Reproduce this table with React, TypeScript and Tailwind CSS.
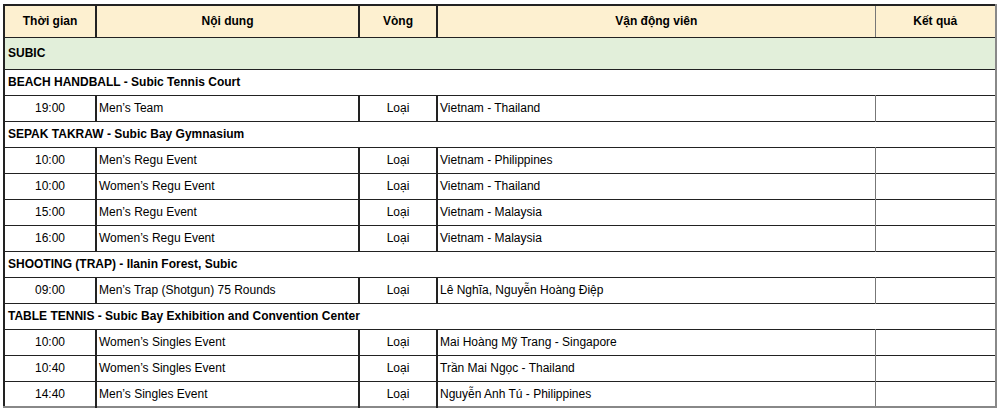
type Row =
  | { kind: "section"; label: string; green?: boolean }
  | { kind: "event"; time: string; event: string; round: string; athletes: string };

const rows: Row[] = [
  { kind: "section", label: "SUBIC", green: true },
  { kind: "section", label: "BEACH HANDBALL - Subic Tennis Court" },
  { kind: "event", time: "19:00", event: "Men’s Team", round: "Loại", athletes: "Vietnam - Thailand" },
  { kind: "section", label: "SEPAK TAKRAW - Subic Bay Gymnasium" },
  { kind: "event", time: "10:00", event: "Men’s Regu Event", round: "Loại", athletes: "Vietnam - Philippines" },
  { kind: "event", time: "10:00", event: "Women’s Regu Event", round: "Loại", athletes: "Vietnam - Thailand" },
  { kind: "event", time: "15:00", event: "Men’s Regu Event", round: "Loại", athletes: "Vietnam - Malaysia" },
  { kind: "event", time: "16:00", event: "Women’s Regu Event", round: "Loại", athletes: "Vietnam - Malaysia" },
  { kind: "section", label: "SHOOTING (TRAP) - Ilanin Forest, Subic" },
  { kind: "event", time: "09:00", event: "Men’s Trap (Shotgun) 75 Rounds", round: "Loại", athletes: "Lê Nghĩa, Nguyễn Hoàng Điệp" },
  { kind: "section", label: "TABLE TENNIS - Subic Bay Exhibition and Convention Center" },
  { kind: "event", time: "10:00", event: "Women’s Singles Event", round: "Loại", athletes: "Mai Hoàng Mỹ Trang - Singapore" },
  { kind: "event", time: "10:40", event: "Women’s Singles Event", round: "Loại", athletes: "Trần Mai Ngọc - Thailand" },
  { kind: "event", time: "14:40", event: "Men’s Singles Event", round: "Loại", athletes: "Nguyễn Anh Tú - Philippines" },
];

const App = () => {
  return (
    <div className="w-[1000px] h-[414px] bg-white pt-[4px] pl-[3px] font-['Liberation_Sans',Arial,sans-serif] text-[12px] text-black">
      <table className="w-[992px] border-collapse table-fixed border-l-2 border-t-2 border-r-2 border-b-2 border-l-[#222] border-t-[#222] border-r-[#888] border-b-[#888]">
        <colgroup>
          <col className="w-[92px]" />
          <col className="w-[263px]" />
          <col className="w-[78px]" />
          <col className="w-[438px]" />
          <col className="w-[121px]" />
        </colgroup>
        <thead>
          <tr className="h-[32px] bg-[#fdf0d0] font-bold">
            <th className="border-r-2 border-r-[#222] border-b border-b-[#222] text-center font-bold">Thời gian</th>
            <th className="border-r-2 border-r-[#222] border-b border-b-[#222] text-center font-bold">Nội dung</th>
            <th className="border-r-2 border-r-[#222] border-b border-b-[#222] text-center font-bold">Vòng</th>
            <th className="border-r border-r-[#777] border-b border-b-[#222] text-center font-bold">Vận động viên</th>
            <th className="border-b border-b-[#222] text-center font-bold">Kết quả</th>
          </tr>
        </thead>
        <tbody>
          {rows.map((row, index) =>
            row.kind === "section" ? (
              <tr
                key={index}
                className={`${row.green ? "h-[32px] bg-[#e2efda]" : "h-[26px] bg-white"} border-b border-b-[#222]`}
              >
                <td colSpan={5} className="px-[3px] font-bold">
                  {row.label}
                </td>
              </tr>
            ) : (
              <tr key={index} className="h-[26px] border-b border-b-[#222]">
                <td className="border-r-2 border-r-[#222] text-center">{row.time}</td>
                <td className="border-r-2 border-r-[#222] px-[2px]">{row.event}</td>
                <td className="border-r-2 border-r-[#222] text-center">{row.round}</td>
                <td className="border-r border-r-[#777] px-[2px]">{row.athletes}</td>
                <td></td>
              </tr>
            )
          )}
        </tbody>
      </table>
    </div>
  );
};

export default App;
